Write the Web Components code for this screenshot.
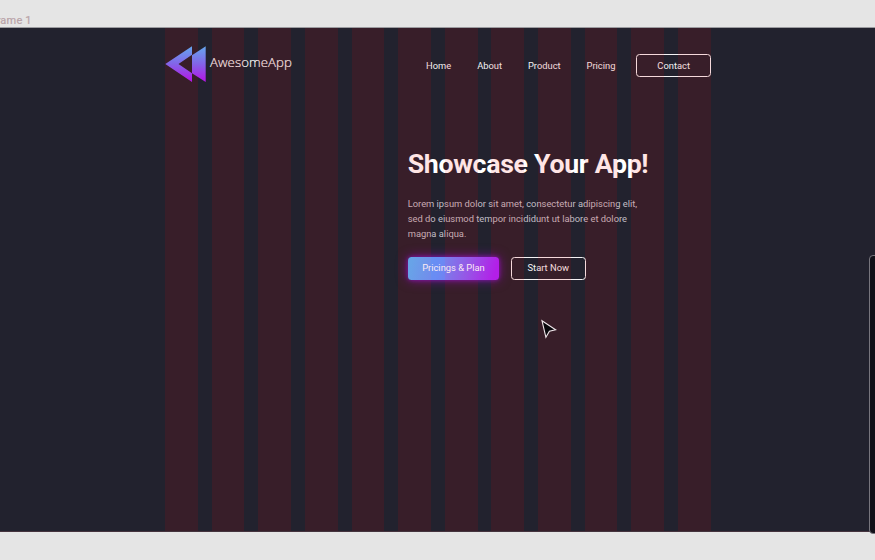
<!DOCTYPE html>
<html lang="en">
<head>
<meta charset="utf-8">
<title>AwesomeApp</title>
<style>
html,body{margin:0;height:100%;overflow:hidden;background:#e5e5e5}
body{font-family:Roboto,"Liberation Sans",sans-serif}
</style>
</head>
<body>
<design-canvas>
  <frame-label slot="label">Frame 1</frame-label>
  <art-board>
    <site-header>
      <brand-logo slot="brand">AwesomeApp</brand-logo>
      <nav-link>Home</nav-link>
      <nav-link>About</nav-link>
      <nav-link>Product</nav-link>
      <nav-link>Pricing</nav-link>
      <app-button slot="action">Contact</app-button>
    </site-header>
    <hero-section>
      <span slot="title">Showcase Your App!</span>
      <span slot="text">Lorem ipsum dolor sit amet, consectetur adipiscing elit,<br>sed do eiusmod tempor incididunt ut labore et dolore<br>magna aliqua.</span>
      <app-button slot="actions" primary>Pricings &amp; Plan</app-button>
      <app-button slot="actions">Start Now</app-button>
    </hero-section>
    <column-grid slot="overlay"></column-grid>
  </art-board>
  <side-panel slot="overlay"></side-panel>
  <mouse-cursor slot="overlay"></mouse-cursor>
</design-canvas>
<script>
const define = (name, html) => customElements.define(name, class extends HTMLElement {
  constructor() {
    super();
    this.attachShadow({mode: 'open'}).innerHTML = html;
  }
});

define('design-canvas', `<style>
:host{display:flex;flex-direction:column;position:relative;width:875px;height:560px;overflow:hidden;background:#e5e5e5}
</style><slot name="label"></slot><slot></slot><slot name="overlay"></slot>`);

define('frame-label', `<style>
:host{display:block;box-sizing:border-box;height:27px;padding-top:14px;margin-left:-9.5px;font-size:11px;line-height:13px;color:#b9a3a8;white-space:nowrap;letter-spacing:.2px;-webkit-text-stroke:.2px #b9a3a8}
</style><slot></slot>`);

define('art-board', `<style>
:host{display:block;position:relative;box-sizing:border-box;height:505px;border-top:1px solid #9c9ca0;border-bottom:1px solid #45343e;background:#22222e;padding:0 164px 0 165px}
</style><slot></slot><slot name="overlay"></slot>`);

define('site-header', `<style>
:host{display:flex;align-items:flex-start;justify-content:space-between;height:119px}
.brand{padding-top:17px}
nav{display:flex;gap:25.9px;padding-top:26px}
.action{margin-left:-4.9px}
</style><div class="brand"><slot name="brand"></slot></div><nav><slot></slot><div class="action"><slot name="action"></slot></div></nav>`);

define('brand-logo', `<style>
:host{display:flex;gap:4px;color:#fff}
svg{display:block;position:relative;z-index:1}
span{font:300 13.2px/18px "Open Sans",sans-serif;padding-top:8px;letter-spacing:.08px;-webkit-text-stroke:.15px #fff}
</style><svg width="41" height="38" viewBox="0 0 41 38"><defs>
<linearGradient id="g" x1="0" y1="1" x2="0" y2="37" gradientUnits="userSpaceOnUse"><stop stop-color="#64a8ee"/><stop offset=".5" stop-color="#8364e8"/><stop offset="1" stop-color="#b712e6"/></linearGradient></defs>
<path fill="url(#g)" fill-rule="evenodd" d="M0.3 19 27 1.3V37ZM13.5 19 27 28.3V9.7Z"/>
<path fill="url(#g)" d="M27 10.2 40.7 1.3V37L27 28.3Z"/></svg><span><slot></slot></span>`);

define('nav-link', `<style>
:host{display:block;font-size:9.35px;line-height:11px;padding-top:6px;color:#f3f1f3}
</style><slot></slot>`);

define('app-button', `<style>
:host{display:flex;align-items:center;justify-content:center;box-sizing:border-box;width:74.6px;height:23px;padding-bottom:1px;border:1px solid #f4f2f4;border-radius:3.5px;color:#f5f3f5;font-size:9.35px;line-height:11px;white-space:nowrap}
:host([primary]){position:relative;z-index:1;width:91.5px;border:0;color:#fbeaf3;background:linear-gradient(90deg,transparent 23px,rgba(90,145,255,.4) 23px 37px,transparent 37px),linear-gradient(105deg,#68a3e8 5%,#7488ec 34%,#9656e6 65%,#b31fe8 94%);box-shadow:0 0 12px #a010c8a0,0 0 4px #a014d8aa}
</style><slot></slot>`);

define('hero-section', `<style>
:host{display:flex;flex-direction:column;margin-left:242.7px}
h1{margin:0;font-size:26.7px;line-height:34px;font-weight:700;letter-spacing:-.29px;color:#fff;white-space:nowrap}
p{margin:15px 0 0;font-size:9.35px;line-height:15px;color:#c2bfc6;white-space:nowrap}
div{display:flex;gap:11.8px;margin-top:15.6px}
</style><h1><slot name="title"></slot></h1><p><slot name="text"></slot></p><div><slot name="actions"></slot></div>`);

define('column-grid', `<style>
:host{position:absolute;inset:0 163.9px 0 165px;display:grid;grid-template-columns:repeat(12,32.85px);column-gap:13.79px;pointer-events:none}
i{background:rgba(255,0,0,.1)}
</style>${'<i></i>'.repeat(12)}`);

define('side-panel', `<style>
:host{position:absolute;left:869px;top:255px;width:20px;height:277px;border:1px solid #77757d;border-radius:4px;background:#111119}
</style>`);

define('mouse-cursor', `<style>
:host{position:absolute;left:540px;top:318px}
svg{display:block}
</style><svg width="18" height="22" viewBox="0 0 18 22"><path d="M2 2.8 15.6 11.8 9.4 13.2 5.9 19.3Z" fill="#08080c" stroke="#f1e8ec" stroke-width="1.1"/></svg>`);
</script>
</body>
</html>
